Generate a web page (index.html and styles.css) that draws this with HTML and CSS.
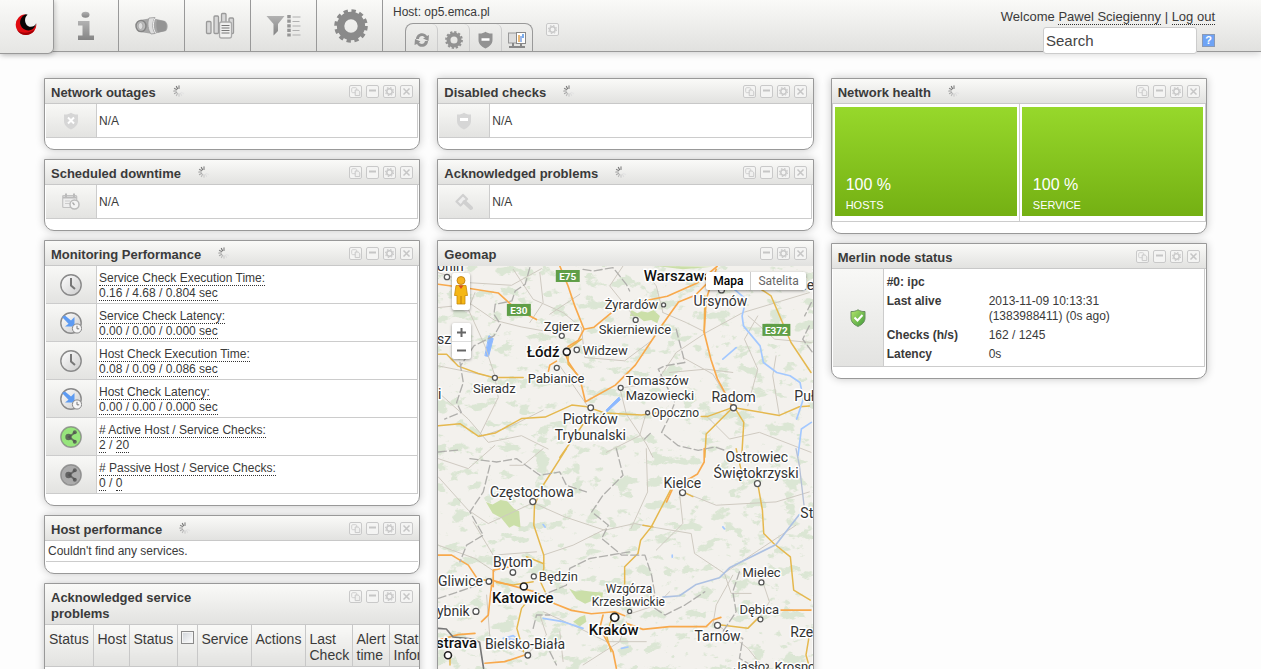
FILE: index.html
```html
<!DOCTYPE html>
<html lang="en">
<head>
<meta charset="utf-8">
<title>Tactical overview</title>
<link rel="stylesheet" href="styles.css">
</head>
<body>
<svg class="defs" aria-hidden="true">
  <defs>
    <linearGradient id="metal" x1="0" y1="0" x2="0" y2="1"><stop offset="0" stop-color="#b2b2b2"/><stop offset="1" stop-color="#848484"/></linearGradient>
    <linearGradient id="pale" x1="0" y1="0" x2="1" y2="1"><stop offset="0" stop-color="#fff"/><stop offset="1" stop-color="#ccc"/></linearGradient>
    <linearGradient id="leaf" x1="0" y1="0" x2="1" y2="1"><stop offset="0" stop-color="#b5e66c"/><stop offset="1" stop-color="#3f9a3a"/></linearGradient>
    <symbol id="gear" viewBox="0 0 32 32">
      <circle cx="16" cy="16" r="9.8" fill="none" stroke="currentColor" stroke-width="7"/>
      <circle cx="16" cy="16" r="14" fill="none" stroke="currentColor" stroke-width="3.6" stroke-dasharray="4 3.33"/>
    </symbol>
    <symbol id="spin" viewBox="0 0 12 12">
      <g stroke-width="1.2" stroke-linecap="round">
        <path d="M6 .8v2.6" stroke="#888"/><path d="M3.4 1.5l1.2 2.2" stroke="#777"/><path d="M1.5 3.4l2.1 1.2" stroke="#888"/><path d="M.8 6h2.4" stroke="#999"/><path d="M1.5 8.6l2.1-1.2" stroke="#aaa"/><path d="M3.4 10.5l1.2-2.2" stroke="#bbb"/><path d="M6 11.2v-2.4" stroke="#ccc"/><path d="M8.6 10.5l-1.2-2.2" stroke="#ddd"/><path d="M10.5 8.6l-2.1-1.2" stroke="#e4e4e4"/>
      </g>
    </symbol>
    <symbol id="c-copy" viewBox="0 0 13 13"><rect x=".5" y=".5" width="12" height="12" rx="1.5" fill="#f4f4f3" stroke="#c9c9c9"/><rect x="2.7" y="2.7" width="5" height="5" rx="1" fill="none" stroke="#d0d0d0"/><path d="M6.2 5h3l1.6 1.6v4H6.2z" fill="#f0f0ef" stroke="#c8c8c8"/></symbol>
    <symbol id="c-min" viewBox="0 0 13 13"><rect x=".5" y=".5" width="12" height="12" rx="1.5" fill="#f4f4f3" stroke="#c9c9c9"/><path d="M3 5.500h7" stroke="#c6c6c6" stroke-width="2"/></symbol>
    <symbol id="c-gear" viewBox="0 0 13 13"><rect x=".5" y=".5" width="12" height="12" rx="1.5" fill="#f4f4f3" stroke="#c9c9c9"/><circle cx="6.5" cy="6.5" r="2.7" fill="none" stroke="#c9c9c9" stroke-width="1.5"/><circle cx="6.5" cy="6.5" r="4" fill="none" stroke="#ccc" stroke-width="1.2" stroke-dasharray="1.6 1.54"/></symbol>
    <symbol id="c-close" viewBox="0 0 13 13"><rect x=".5" y=".5" width="12" height="12" rx="1.5" fill="#f4f4f3" stroke="#c9c9c9"/><path d="M3.5 3.5l6 6m0-6l-6 6" stroke="#c6c6c6" stroke-width="1.5"/></symbol>
    <symbol id="clock" viewBox="0 0 22 22"><circle cx="11" cy="11" r="10.2" fill="url(#pale)" stroke="#8a8a8a" stroke-width="1.4"/><path d="M11 4v7.5l4 3.5" fill="none" stroke="#777" stroke-width="2"/></symbol>
    <symbol id="latency" viewBox="0 0 22 22"><circle cx="11" cy="11" r="10.2" fill="url(#pale)" stroke="#8a8a8a" stroke-width="1.4"/><path d="M2 5l3-1.500 6 5L14.500 5v9.500H5l3.500-2.800z" fill="#5d9bf2"/><circle cx="17" cy="16.500" r="4.600" fill="#f6f6f6" stroke="#888"/><path d="M17 13.800v3h2.200" fill="none" stroke="#777"/></symbol>
    <symbol id="share" viewBox="0 0 22 22"><circle cx="11" cy="11" r="10.2" stroke="#7a7a7a" stroke-opacity=".7" stroke-width="1.4" fill="currentColor"/><path d="M15 6.500l-6 4.500 6 4.500" fill="none" stroke="#505050" stroke-opacity=".75" stroke-width="1.8"/><g fill="#505050" fill-opacity=".8"><circle cx="8.500" cy="11" r="3.200"/><circle cx="14.800" cy="6.300" r="2"/><circle cx="14.800" cy="15.800" r="2"/></g></symbol>
    <symbol id="shield" viewBox="0 0 16 18"><path d="M1 2.500C4 2.800 6 2 8 .8c2 1.200 4 2 7 1.700V9c0 4-3 6.800-7 8.400C4 15.800 1 13 1 9z" fill="currentColor"/></symbol>
  </defs>
</svg>

<header class="top">
  <nav class="menu" aria-label="Main">
    <button class="tab logo" aria-label="Home">
      <svg width="22" height="22" viewBox="0 0 66 66"><path d="M33 1A31 31 0 1 0 64 29C59 43 43 50 29 41C16 32 20 10 33 1z" fill="#e00b10"/><path d="M6 48A31 31 0 0 0 60 46C44 58 20 60 6 48z" fill="#a30006"/><path d="M33 1C18 6 12 22 17 34C23 50 46 55 57 41C61 37 63 31 64 27C57 42 39 42 33 29C28 19 30 8 38 2z" fill="#0a0505"/></svg>
    </button>
    <button class="tab" aria-label="About">
      <svg width="20" height="30" viewBox="0 0 20 30" fill="url(#metal)"><ellipse cx="9.500" cy="3.800" rx="4" ry="3"/><path d="M2 10h11.500v14.500H18V29H2v-4.500h4.500V14.500H2z"/></svg>
    </button>
    <button class="tab" aria-label="Monitoring">
      <svg width="34" height="18" viewBox="0 0 34 18"><path d="M5 3l12-2 13 3c3 2 3.500 7 1 10l-13 3L5 15z" fill="#a6a6a6"/><path d="M14 1l6-.5c-3 5-3 11 0 16l-4 .5c-3-4-4-11-2-16z" fill="#ddd" stroke="#999" stroke-width=".8"/><path d="M22 3l7 1c3 2 3.500 7 1 10l-7 1.500c-2-4-2-9-1-12.500z" fill="#949494"/><path d="M20 1.500c-2.500 5-2 10 .5 14.500" stroke="#f2f2f2" fill="none"/><ellipse cx="6" cy="9" rx="5" ry="5.500" fill="#bbb" stroke="#858585" stroke-width="1.500"/><ellipse cx="5.500" cy="9" rx="2.500" ry="3.500" fill="#ddd" stroke="#aaa"/></svg>
    </button>
    <button class="tab" aria-label="Reporting">
      <svg class="reports" width="30" height="28" viewBox="0 0 30 28"><g fill="#d8d8d8" stroke="#9a9a9a" stroke-width="1.300"><rect x="1.500" y="9.500" width="4.500" height="12" rx="1"/><rect x="9" y="4" width="4.500" height="17.500" rx="1"/><rect x="16.500" y="1.500" width="4.500" height="16" rx="1"/><rect x="24" y="6" width="4.500" height="15.500" rx="1"/></g><path d="M14.500 12q0-2 2-2h8q2 0 2 2v12q0 2-2 2h-8q-2 0-2-2z" fill="#f0f0ef" stroke="#aaa" stroke-width="1.300"/><path d="M16.500 13.500h8m-8 2.500h8m-8 2.500h8m-8 2.500h8" stroke="#777"/></svg>
    </button>
    <button class="tab" aria-label="Filters">
      <svg width="35" height="22" viewBox="0 0 35 22"><path d="M.5 1h18l-6.500 8v7l-4.500 4.500V9z" fill="url(#metal)"/><path d="M23 0v22" stroke="#959595" stroke-width="3.500" stroke-dasharray="3.200 1.400"/><path d="M26.500 2h8m-8 4.500h7m-7 4.500h8m-8 4.500h7m-7 4.500h8" stroke="#b0b0b0" stroke-width="1.200"/></svg>
    </button>
    <button class="tab gear-tab" aria-label="Configuration"><svg width="34" height="34"><use href="#gear"/></svg></button>
  </nav>
  <section class="host">
    <p class="host-name">Host: op5.emca.pl</p>
    <div class="tools">
      <div class="tool-set">
        <button aria-label="Refresh"><svg width="18" height="18" viewBox="0 0 18 18"><path d="M3 8c0-6 8-8 11-3l2-1-.5 6-5.500-2.500 2-1C10 4 6 4.500 6 8zM15 10c0 6-8 8-11 3l-2.500 1 .5-6 5.500 2.500-1.500 1c2 2.500 5.500 1.500 6-1.500z" fill="#929292"/></svg></button>
        <button aria-label="Settings"><svg width="18" height="18"><use href="#gear"/></svg></button>
        <button aria-label="Shield"><svg width="17" height="18" viewBox="0 0 16 18"><use href="#shield"/><path d="M4 8.500h8" stroke="#fff" stroke-width="2.500"/></svg></button>
        <button aria-label="Screens"><svg width="20" height="18" viewBox="0 0 20 18"><rect x="1.500" y="2" width="11" height="10" fill="#ddd" stroke="#999"/><rect x="9.500" y="1.500" width="9" height="11" fill="#fff" stroke="#888"/><path d="M12 4v7" stroke="#e2a14b" stroke-width="1.500"/><path d="M14 5v6" stroke="#9db8e8" stroke-width="2"/><path d="M16 3v4" stroke="#4e91e4" stroke-width="1.500"/><path d="M6 12v3m8-2v2M2 16h16" stroke="#888" stroke-width="2"/></svg></button>
      </div>
      <button class="extra" aria-label="Widget settings"><svg width="13" height="13"><use href="#c-gear"/></svg></button>
    </div>
  </section>
  <section class="account">
    <p>Welcome <a href="#">Pawel Sciegienny</a> | <a href="#">Log out</a></p>
    <form class="search">
      <input type="text" value="Search" aria-label="Search">
      <button type="button" class="help" aria-label="Help">?</button>
    </form>
  </section>
</header>

<main class="board">
  <div class="column">
    <section class="widget">
      <header><h2>Network outages</h2><svg class="spin"><use href="#spin"/></svg><div class="controls"><button aria-label="Copy"><svg><use href="#c-copy"/></svg></button><button aria-label="Collapse"><svg><use href="#c-min"/></svg></button><button aria-label="Edit"><svg><use href="#c-gear"/></svg></button><button aria-label="Close"><svg><use href="#c-close"/></svg></button></div></header>
      <div class="row"><span class="icon faint"><svg width="16" height="18" viewBox="0 0 16 18"><use href="#shield"/><path d="M5 5.500l6 6m0-6l-6 6" stroke="#fff" stroke-width="2"/></svg></span><p>N/A</p></div>
    </section>
    <section class="widget">
      <header><h2>Scheduled downtime</h2><svg class="spin"><use href="#spin"/></svg><div class="controls"><button aria-label="Copy"><svg><use href="#c-copy"/></svg></button><button aria-label="Collapse"><svg><use href="#c-min"/></svg></button><button aria-label="Edit"><svg><use href="#c-gear"/></svg></button><button aria-label="Close"><svg><use href="#c-close"/></svg></button></div></header>
      <div class="row"><span class="icon faint"><svg width="18" height="17" viewBox="0 0 18 17"><rect x=".7" y="2.500" width="14" height="12" rx="1" fill="#eee" stroke="#c2c2c2" stroke-width="1.200"/><path d="M1 4.500h13.500M4 .5v4M12 .5v4" stroke="#bbb" stroke-width="2"/><path d="M3 8h5m-5 2.500h5" stroke="#ccc"/><circle cx="12.500" cy="11.500" r="4.500" fill="#f4f4f4" stroke="#bbb" stroke-width="1.500"/><path d="M10.500 9.500l2 2.500" stroke="#aaa" stroke-width="1.300"/></svg></span><p>N/A</p></div>
    </section>
    <section class="widget">
      <header><h2>Monitoring Performance</h2><svg class="spin"><use href="#spin"/></svg><div class="controls"><button aria-label="Copy"><svg><use href="#c-copy"/></svg></button><button aria-label="Collapse"><svg><use href="#c-min"/></svg></button><button aria-label="Edit"><svg><use href="#c-gear"/></svg></button><button aria-label="Close"><svg><use href="#c-close"/></svg></button></div></header>
      <div class="row tall"><span class="icon"><svg width="22" height="22"><use href="#clock"/></svg></span><p><a href="#">Service Check Execution Time:</a><br><a href="#">0.16 / 4.68 / 0.804 sec</a></p></div>
      <div class="row tall"><span class="icon"><svg width="22" height="22"><use href="#latency"/></svg></span><p><a href="#">Service Check Latency:</a><br><a href="#">0.00 / 0.00 / 0.000 sec</a></p></div>
      <div class="row tall"><span class="icon"><svg width="22" height="22"><use href="#clock"/></svg></span><p><a href="#">Host Check Execution Time:</a><br><a href="#">0.08 / 0.09 / 0.086 sec</a></p></div>
      <div class="row tall"><span class="icon"><svg width="22" height="22"><use href="#latency"/></svg></span><p><a href="#">Host Check Latency:</a><br><a href="#">0.00 / 0.00 / 0.000 sec</a></p></div>
      <div class="row tall"><span class="icon active"><svg width="22" height="22"><use href="#share"/></svg></span><p><a href="#"># Active Host / Service Checks:</a><br><a href="#">2</a> / <a href="#">20</a></p></div>
      <div class="row tall"><span class="icon passive"><svg width="22" height="22"><use href="#share"/></svg></span><p><a href="#"># Passive Host / Service Checks:</a><br><a href="#">0</a> / <a href="#">0</a></p></div>
    </section>
    <section class="widget">
      <header><h2>Host performance</h2><svg class="spin"><use href="#spin"/></svg><div class="controls"><button aria-label="Copy"><svg><use href="#c-copy"/></svg></button><button aria-label="Collapse"><svg><use href="#c-min"/></svg></button><button aria-label="Edit"><svg><use href="#c-gear"/></svg></button><button aria-label="Close"><svg><use href="#c-close"/></svg></button></div></header>
      <p class="note">Couldn't find any services.</p>
    </section>
    <section class="widget">
      <header><h2>Acknowledged service problems</h2><div class="controls"><button aria-label="Copy"><svg><use href="#c-copy"/></svg></button><button aria-label="Collapse"><svg><use href="#c-min"/></svg></button><button aria-label="Edit"><svg><use href="#c-gear"/></svg></button><button aria-label="Close"><svg><use href="#c-close"/></svg></button></div></header>
      <table class="problems">
        <colgroup><col class="w48"><col class="w36"><col class="w48"><col class="w20"><col class="w54"><col class="w54"><col class="w47"><col class="w37"><col class="w80"></colgroup>
        <thead><tr><th>Status</th><th>Host</th><th>Status</th><th class="tick"><input type="checkbox" aria-label="Select all"></th><th>Service</th><th>Actions</th><th>Last Check</th><th>Alert time</th><th>Status Information</th></tr></thead>
        <tbody><tr><td colspan="9"></td></tr></tbody>
      </table>
    </section>
  </div>

  <div class="column">
    <section class="widget">
      <header><h2>Disabled checks</h2><svg class="spin"><use href="#spin"/></svg><div class="controls"><button aria-label="Copy"><svg><use href="#c-copy"/></svg></button><button aria-label="Collapse"><svg><use href="#c-min"/></svg></button><button aria-label="Edit"><svg><use href="#c-gear"/></svg></button><button aria-label="Close"><svg><use href="#c-close"/></svg></button></div></header>
      <div class="row"><span class="icon faint"><svg width="16" height="18" viewBox="0 0 16 18"><use href="#shield"/><path d="M4 7.500h8" stroke="#fff" stroke-width="3"/></svg></span><p>N/A</p></div>
    </section>
    <section class="widget">
      <header><h2>Acknowledged problems</h2><svg class="spin"><use href="#spin"/></svg><div class="controls"><button aria-label="Copy"><svg><use href="#c-copy"/></svg></button><button aria-label="Collapse"><svg><use href="#c-min"/></svg></button><button aria-label="Edit"><svg><use href="#c-gear"/></svg></button><button aria-label="Close"><svg><use href="#c-close"/></svg></button></div></header>
      <div class="row"><span class="icon faint"><svg width="18" height="18" viewBox="0 0 18 18"><path d="M1.500 8.500L8 2l4 4-6.500 6.500z" fill="#eee" stroke="#d0d0d0" stroke-width="2.200" stroke-linejoin="round"/><path d="M9.500 9l6.500 6" stroke="#d0d0d0" stroke-width="4" stroke-linecap="round"/></svg></span><p>N/A</p></div>
    </section>
    <section class="widget">
      <header class="flat"><h2>Geomap</h2><div class="controls"><button aria-label="Collapse"><svg><use href="#c-min"/></svg></button><button aria-label="Edit"><svg><use href="#c-gear"/></svg></button><button aria-label="Close"><svg><use href="#c-close"/></svg></button></div></header>
      <div class="map">
        <svg class="chart" viewBox="438 266 375 440" preserveAspectRatio="xMinYMin slice" role="img" aria-label="Map of southern Poland">
          <defs>
            <filter id="woods" x="0" y="0" width="100%" height="100%" color-interpolation-filters="sRGB"><feTurbulence type="fractalNoise" baseFrequency=".06 .09" numOctaves="5" seed="11"/><feColorMatrix values="0 0 0 0 .86  0 0 0 0 .9  0 0 0 0 .83  12 0 0 0 -7"/></filter>
          </defs>
          <rect x="438" y="266" width="375" height="440" fill="#f3f1ed"/>
          <rect x="438" y="266" width="375" height="440" filter="url(#woods)"/>
          <g fill="none" stroke-linejoin="round" stroke-linecap="round">
            <g transform="translate(430 236) scale(.33333)">
              <path d="M605 222l18 10 12-6 20 4 16-8 20 18-8 22-18-10-22 4-18-14-24-2zM680 90l80 10 90-8z" fill="#cbdfa8"/>
              <path d="M178 300l12 8-14 54-10-2zM530 522l38-38 4 8-40 36z" fill="#8cb8ff" stroke="#8fbaff" stroke-width="3"/>
              <g stroke="#cfcac1" stroke-width="3">
                <path d="M25 110l90 30 130 8 90-50M24 215l100-10 70 48 80 20 90 16M195 420l-30-90-50-110 20-50M195 425l10 60-58 118M250 100l60 90 90 40 55 45M455 275l10 90 120 10 80-60M700 230l70 30 60 30 110-60 200-60M620 250l-80-100 40-60M640 100l40 50 20 80M830 290l-90 60-60 90-95 15M910 515l-60-100-90-50M985 240l-40 70 40 90-30 110M1050 540l-20-120 10-60M570 455l20 80 60 90 20 40M25 470l90 80 60 70 100-20 80 40M24 390l100 20 70 15M1146 320l-110-10-80-70M480 520l-90-130M150 603l90-30 100-50M330 110l10 90-40 60M830 540l70 70 90-20 155 60M650 530l-20 70-100 50M360 235l90-60M720 410l110-10 80 10"/>
              </g>
              <path d="M25 570l65-6 56 38 50-10 80-44 70-4 80-36 40 4 60 20 110 6 80-12M25 355l25 0 35 36 60 22 45 12h90M815 542l20 0 75-27 140 24 60-26 30-2M910 515l-80 80-4 70M915 515l28 45-6 100M826 180l-2 110M1145 410l-60-90-60-140-60-40M455 310l-40 30v45l36 40M480 535l-40 60-50 70" stroke="#e5b84e" stroke-width="4.500"/>
              <path d="M25 145l90 12 90 14 50 45 65 35M390 90l25 60 20 60 28 70-18 34-30 18M405 350l12 30 34 50 16 68 90-50 60-60 80-120 50-70 50-20 50-50M463 280l30-6 60-50 70-25 90-18 90-40 60-50M860 100l-30 90-6 100 20 80 20 60 46 85M380 376l-20 12-4 18" stroke="#f8a94c" stroke-width="5"/>
              <path d="M915 160l35 30-12 50 4 30 50 60 10 50 40 30 40 10 30 20 10 50-20 60M880 370l40-35M1146 560l-30 20-10 80" stroke="#a3c8ff" stroke-width="5"/>
              <path d="M300 95l-14 50-30 20-10 30-50 10-4 30 20 30-20 35-60 30-40 60M90 380l10 60-20 60 14 30-50 20M460 100l30 5 60-10 40 50 10 20M740 280l10 40 16 60-60 10-20 10 20 40 30 60-20 50-20 40 50 40 60 14 50-10 30 10M645 610l20-20M1140 270l-20 40 30 40M1146 200l-20 40" stroke="#b0afac" stroke-width="4" stroke-dasharray="24 10"/>
            </g>
            <g transform="translate(430 449) scale(.33333)">
              <path d="M168 160l20 8 24-14 20 4 20 22 16 8 4 50-20-8-14 8-24-30-26-14zM418 420l20 10 20-4 30 4 32 2-4 30-30-4-20 8-26-14zM430 520l20-14 16-6 4 20-20 14z" fill="#cbdfa8"/>
              <g stroke="#cfcac1" stroke-width="3">
                <path d="M25 85l90 100 60 40 130-60M315 165l90 40 120 40 90-20 50 10M340 320l90-30 100-50M25 290l110 40 60 40M750 135l10 90-80 80M760 130l100 40 180-10 100-30M665 235l120 20 10 60 90 60 20 60 60 0M910 380l-50 90-10 60M1000 400l20 60-30 50M890 370l90-60 120-80M650 0l4 130-50 110M340 0l-60 50-40 0M25 30l90 30 80-70M865 530l90 70 40 50M590 520l-20 60-110 70M340 490l110 50 80 40 120 0M290 620l60-60-20-60M400 640l-10-90M170 440l10 130 100 40M590 500l90-30 40-40M320 310l-130 10-60-100"/>
              </g>
              <path d="M410 0l-70 110-26 60-2 60 30 90 0 40-10 40 14 30M315 430l-40 50-14 60 20 70M725 120l-60 115-32 40-8 40-40 40v60M640 230l30 5M760 130l30 14M985 105l14 80 4 70 30 30 50 40 10 100 50 30M985 510l-30 30-80-10M550 500l-20 60 14 50M920 0l14 60M1140 560l-10 60 14 50M200 402l50 8 60-10M60 650v-20M290 325l50 20" stroke="#e5b84e" stroke-width="4.500"/>
              <path d="M25 320h40l50 30 30 45h40l130 35 60 36 50 20 60 10 70-6 30 12M590 525l50 18 80-8h110l20-20 24-8M190 415v-50l50-10M185 410l-10 90-20 20M1055 485h90M824 0v40l-20 36-75 44-18 40M520 500l-10 40 40 70 10 50M25 575l60-16 50-4M165 645l60-5 60-20" stroke="#f8a94c" stroke-width="5"/>
              <path d="M340 510l60 10 60 20M220 570l30-8 20 14zM575 600l20-4M728 320v6M880 235l5 6M340 228l6 8" stroke="#a3c8ff" stroke-width="5"/>
              <path d="M700 446l50-4 50-34 70-20 30-30 60-30 80-40 70-90" stroke="#adc1e2" stroke-width="5"/>
              <path d="M1124 170l-14-120-10-50" stroke="#b5c0d6" stroke-width="4"/>
              <path d="M25 10l60-6M120 30l80 10 60-10 70 50 60-10 20 40 60 20M180 50l-20 80-40 60 40 70-50 30-20 50M560 0l20 80-60 60-34 50 50 40-20 40 60 50 70 0 20 60 10 60-30 20 60 40 60-30 60-40M600 310l-120 20-60 30-10 50-70 30M25 450l60-20 60-20M930 370l-20 60 10 60-40 60 60 20-10 60 50 30M310 540l10-40 40 0M360 610l20 40" stroke="#b0afac" stroke-width="4" stroke-dasharray="24 10"/>
              <path d="M25 540l24 2 20 24 60 6 20 10 6 40 6 38" stroke="#777" stroke-width="5"/>
            </g>
          </g>
          <g fill="#fff" stroke="#555" stroke-width="1.300">
            <circle cx="447" cy="277" r="2.700"/><circle cx="562" cy="336" r="2.500"/><circle cx="567" cy="352" r="3.500" stroke="#222" stroke-width="1.600"/><circle cx="577" cy="350" r="2.700"/><circle cx="557" cy="368" r="2.500"/><circle cx="495" cy="378" r="2.500"/><circle cx="636" cy="320" r="2.500"/><circle cx="664" cy="305" r="2"/><circle cx="621" cy="388" r="2.500"/><circle cx="591" cy="408" r="2.800"/><circle cx="648" cy="413" r="2"/><circle cx="734" cy="408" r="3"/><circle cx="722" cy="290" r="3"/><circle cx="533" cy="502" r="3"/><circle cx="683" cy="493" r="3"/><circle cx="758" cy="484" r="3"/><circle cx="513" cy="573" r="2.800"/><circle cx="534" cy="577" r="2.500"/><circle cx="489" cy="582" r="2.800"/><circle cx="524" cy="587" r="3.500" stroke="#222" stroke-width="1.600"/><circle cx="476" cy="612" r="3"/><circle cx="630" cy="612" r="2"/><circle cx="615" cy="618" r="4" stroke="#222" stroke-width="1.800"/><circle cx="718" cy="626" r="3"/><circle cx="761" cy="620" r="2.500"/><circle cx="762" cy="583" r="2.500"/><circle cx="528" cy="656" r="2.800"/><circle cx="448" cy="656" r="3.500" stroke="#222" stroke-width="1.600"/><circle cx="767" cy="667" r="2"/>
          </g>
          <g class="town">
            <text x="605" y="309">Żyrardów</text><text x="544" y="331">Zgierz</text><text x="599" y="334">Skierniewice</text><text x="583" y="355">Widzew</text><text x="528" y="383">Pabianice</text><text x="473" y="393">Sieradz</text><text x="626" y="385">Tomaszów</text><text x="626" y="400">Mazowiecki</text><text x="539" y="582">Będzin</text><text x="743" y="578">Mielec</text><text x="740" y="615">Dębica</text><text x="734" y="672">Jasło</text><text x="775" y="672">Krosno</text>
            <g class="small"><text x="652" y="417">Opoczno</text><text x="606" y="594">Wzgórza</text><text x="592" y="607">Krzesławickie</text></g>
            <g class="large"><text x="437" y="271">onin</text><text x="694" y="306">Ursynów</text><text x="563" y="424">Piotrków</text><text x="555" y="440">Trybunalski</text><text x="795" y="401">Puławy</text><text x="437" y="344">sz</text><text x="438" y="399">i</text><text x="804" y="290">iedlce</text><text x="490" y="497">Częstochowa</text><text x="664" y="488">Kielce</text><text x="726" y="462">Ostrowiec</text><text x="714" y="478">Świętokrzyski</text><text x="493" y="568">Bytom</text><text x="438" y="587">Gliwice</text><text x="695" y="642">Tarnów</text><text x="791" y="638">Rzeszów</text><text x="437" y="617">ybnik</text><text x="485" y="650">Bielsko-Biała</text><text x="801" y="518">St</text><text x="712" y="402">Radom</text></g>
            <g class="big"><text x="644" y="281">Warszawa</text><text x="527" y="357">Łódź</text><text x="492" y="604">Katowice</text><text x="589" y="636">Kraków</text><text x="436" y="649">strava</text></g>
          </g>
          <g fill="#5f9e47"><rect x="556" y="270" width="24" height="12"/><rect x="507" y="304" width="24" height="12"/><rect x="763" y="324" width="28" height="12"/></g>
          <g class="road"><text x="568" y="280">E75</text><text x="519" y="314">E30</text><text x="777" y="334">E372</text></g>
        </svg>
        <button class="pegman" aria-label="Street View"><svg width="14" height="30" viewBox="0 0 14 30"><circle cx="7" cy="4.500" r="4" fill="#f5b320" stroke="#b97a0c" stroke-width=".8"/><path d="M2 9.500h10l1.500 10H11V28H3v-8.500H.5z" fill="#f5b714" stroke="#c88a0b" stroke-width=".8"/><path d="M4.500 9.500h5L7 13z" fill="#d84a23"/><path d="M7 20v8" stroke="#b97a0c"/></svg></button>
        <div class="zoom"><button aria-label="Zoom in"><svg width="9" height="9"><path d="M4.500 0v9M0 4.500h9" stroke="#666" stroke-width="2"/></svg></button><button aria-label="Zoom out"><svg width="9" height="9"><path d="M0 4.500h9" stroke="#666" stroke-width="2"/></svg></button></div>
        <div class="kinds"><button class="on">Mapa</button><button>Satelita</button></div>
      </div>
    </section>
  </div>

  <div class="column">
    <section class="widget">
      <header><h2>Network health</h2><svg class="spin"><use href="#spin"/></svg><div class="controls"><button aria-label="Copy"><svg><use href="#c-copy"/></svg></button><button aria-label="Collapse"><svg><use href="#c-min"/></svg></button><button aria-label="Edit"><svg><use href="#c-gear"/></svg></button><button aria-label="Close"><svg><use href="#c-close"/></svg></button></div></header>
      <div class="health">
        <div><p class="tile"><b>100 %</b><span>HOSTS</span></p></div>
        <div><p class="tile"><b>100 %</b><span>SERVICE</span></p></div>
      </div>
    </section>
    <section class="widget">
      <header><h2>Merlin node status</h2><div class="controls"><button aria-label="Copy"><svg><use href="#c-copy"/></svg></button><button aria-label="Collapse"><svg><use href="#c-min"/></svg></button><button aria-label="Edit"><svg><use href="#c-gear"/></svg></button><button aria-label="Close"><svg><use href="#c-close"/></svg></button></div></header>
      <div class="row node">
        <span class="icon"><svg width="16" height="18" viewBox="0 0 16 18"><path d="M1 2.500C4 2.800 6 2 8 .8c2 1.200 4 2 7 1.700V9c0 4-3 6.800-7 8.400C4 15.800 1 13 1 9z" fill="url(#leaf)" stroke="#6b8f62"/><path d="M4.500 8.500l3 3 5-5.500" fill="none" stroke="#fff" stroke-width="2"/></svg></span>
        <table>
          <tr><th colspan="2">#0: ipc</th></tr>
          <tr><th>Last alive</th><td>2013-11-09 10:13:31<br>(1383988411) (0s ago)</td></tr>
          <tr><th>Checks (h/s)</th><td>162 / 1245</td></tr>
          <tr><th>Latency</th><td>0s</td></tr>
        </table>
      </div>
    </section>
  </div>
</main>
</body>
</html>
```

FILE: styles.css
```css
* { box-sizing: border-box; }
html { scrollbar-width: none; background: #fdfdfd; }
body {
  margin: 0;
  font: 12px/15px "Liberation Sans", Arial, sans-serif;
  color: #3a3a3a;
}
p, h2 { margin: 0; }
button {
  padding: 0;
  border: 0;
  background: none;
  color: inherit;
  font: inherit;
  cursor: pointer;
}
svg { display: block; }
a { color: inherit; text-decoration: none; border-bottom: 1px dotted #333; }
.defs { position: absolute; width: 0; height: 0; }

/* top bar */
.top {
  display: flex;
  height: 52px;
  background: linear-gradient(#fafaf8, #e1e1df);
  border-bottom: 1px solid #999;
  box-shadow: 0 1px 8px rgba(0, 0, 0, .2);
}
.menu { display: flex; align-items: flex-start; }
.tab {
  display: flex;
  align-items: center;
  justify-content: center;
  width: 66px;
  height: 51px;
  border-right: 1px solid #999;
}
.tab.logo {
  width: 54px;
  height: 54px;
  padding-right: 2px;
  padding-bottom: 4px;
  background: linear-gradient(#fafaf8, #e6e6e4);
  border-bottom: 1px solid #999;
  border-radius: 0 0 6px 0;
  box-shadow: 1px 1px 5px rgba(0, 0, 0, .2);
}
.tab:nth-child(2) { width: 65px; }
.reports { margin-left: 4px; }
.gear-tab { padding-left: 3px; color: #8a8a8a; }
.host { display: flex; flex-direction: column; padding: 4px 0 0 10px; }
.host-name { line-height: 16px; }
.tools { display: flex; gap: 13px; padding: 3px 0 0 12px; }
.tool-set {
  display: flex;
  height: 28px;
  border: 1px solid #999;
  border-bottom: 0;
  border-radius: 8px 8px 0 0;
  color: #929292;
}
.tool-set button {
  display: flex;
  align-items: center;
  justify-content: center;
  width: 32px;
  padding-top: 4px;
  border-right: 1px solid #ccc;
  border-radius: 0 6px 0 0;
}
.tool-set button:last-child { width: 30px; border-right: 0; }
.extra { height: 13px; }
.account {
  display: flex;
  flex-direction: column;
  align-items: flex-end;
  margin-left: auto;
  padding: 9px 46px 0 0;
  font-size: 13px;
}
.search { display: flex; align-items: center; gap: 5px; padding-top: 3px; }
.search input {
  width: 154px;
  height: 27px;
  padding: 0 2px;
  border: 1px solid #ccc;
  border-radius: 3px;
  background: #fff;
  color: #444;
  font: 15px/20px "Liberation Sans", Arial, sans-serif;
}
.help {
  width: 13px;
  height: 13px;
  border: 1px solid #8a9ab5;
  background: #6ea3f5;
  color: #fff;
  font-size: 11px;
  font-weight: bold;
  line-height: 11px;
}

/* widgets */
.board {
  display: grid;
  grid-template-columns: repeat(3, minmax(0, 1fr));
  gap: 17px;
  align-items: start;
  padding: 26px 54px 12px 44px;
}
.column { display: flex; flex-direction: column; gap: 9px; }
.widget {
  overflow: hidden;
  padding-bottom: 11px;
  border: 1px solid #999;
  border-radius: 0 0 10px 10px;
  background: #fff;
  box-shadow: 0 0 9px rgba(0, 0, 0, .22);
}
.widget > header {
  display: flex;
  align-items: flex-start;
  padding: 6px 6px 2px;
  background: linear-gradient(#fafaf8, #e2e2e0);
  border-bottom: 1px solid #c8c8c8;
}
.widget > header.flat { border-bottom-color: #e2e2e0; }
h2 { max-width: 160px; font-size: 13px; line-height: 16px; font-weight: bold; }
.spin { width: 12px; height: 12px; margin-left: 17px; }
.controls { display: flex; gap: 4px; margin-left: auto; }
.controls svg { width: 13px; height: 13px; }
.row {
  display: flex;
  min-height: 34px;
  margin: 0 1px;
  border-bottom: 1px solid #ccc;
  border-right: 1px solid #ccc;
}
.row.tall { min-height: 38px; }
.row p { align-self: center; padding: 2px 0 0 2px; }
.icon {
  display: flex;
  flex: none;
  align-items: center;
  justify-content: center;
  width: 51px;
  border-right: 1px solid #ccc;
  background: linear-gradient(#f8f8f6, #e3e3e1);
}
.icon.faint { color: #d6d6d6; }
.icon.active { color: #97e57c; }
.icon.passive { color: #ababab; }
.note { padding: 3px 2px 2px; margin: 0 1px; border-bottom: 1px solid #ccc; }

.problems { width: 424px; border-collapse: collapse; table-layout: fixed; }
.problems th {
  height: 41px;
  padding: 6px 0 2px 4px;
  border: solid #c8c8c8;
  border-width: 0 1px 1px 0;
  background: linear-gradient(#f9f9f7, #e2e2e0);
  font-size: 14px;
  font-weight: normal;
  line-height: 16px;
  text-align: left;
  vertical-align: top;
}
.problems td { height: 34px; padding: 0; }
.problems .tick { padding-left: 3px; }
.problems input {
  display: block;
  appearance: none;
  width: 13px;
  height: 13px;
  margin: 0;
  border: 1px solid #8a8a8a;
  background: linear-gradient(135deg, #cfd3d8, #fff);
  box-shadow: inset 0 0 0 1px #f4f4f4;
}
.w48 { width: 48px; } .w36 { width: 36px; } .w20 { width: 20px; }
.w54 { width: 54px; } .w47 { width: 47px; }
.w37 { width: 37px; } .w80 { width: 80px; }

.health {
  display: grid;
  grid-template-columns: 1fr 1fr;
  border: solid #ccc;
  border-width: 0 1px 1px;
}
.health > div { padding: 3px 2px 5px; }
.health > div + div { border-left: 1px solid #ccc; }
.tile {
  display: flex;
  flex-direction: column;
  justify-content: flex-end;
  height: 109px;
  padding: 0 11px 3px;
  background: linear-gradient(#97d82b, #74b013);
  color: #fff;
}
.tile b { font-size: 16px; line-height: 24px; font-weight: normal; }
.tile span { font-size: 11px; line-height: 16px; }

.node table { margin: 4px 0 2px 1px; border-spacing: 0; }
.node th, .node td { padding: 2px; text-align: left; vertical-align: top; }
.node th { width: 102px; }

/* map */
.map { position: relative; margin-bottom: -11px; overflow: hidden; }
.chart { width: 100%; height: auto; }
.town { font: 13px Roboto, sans-serif; fill: #333; stroke: #fff; stroke-width: 3px; stroke-linejoin: round; paint-order: stroke; }
.small { font-size: 12px; }
.large { font-size: 14px; }
.big { font-size: 15px; font-weight: 500; fill: #111; }
.road { font: bold 10px Roboto, sans-serif; fill: #fff; text-anchor: middle; }
.pegman, .zoom, .kinds {
  position: absolute;
  border-radius: 2px;
  background: #fff;
  box-shadow: 0 1px 3px rgba(0, 0, 0, .4);
}
.pegman { top: 7px; left: 14px; padding: 3px 2px 4px; }
.zoom { top: 57px; left: 14px; width: 19px; }
.zoom button { display: flex; align-items: center; justify-content: center; width: 100%; height: 18px; }
.zoom button + button { border-top: 1px solid #ddd; }
.kinds { top: 6px; right: 7px; display: flex; font: 12px/18px Roboto, sans-serif; color: #666; }
.kinds button { padding: 0 7px; }
.kinds .on { border-right: 1px solid #ccc; color: #000; font-weight: 500; }
```
